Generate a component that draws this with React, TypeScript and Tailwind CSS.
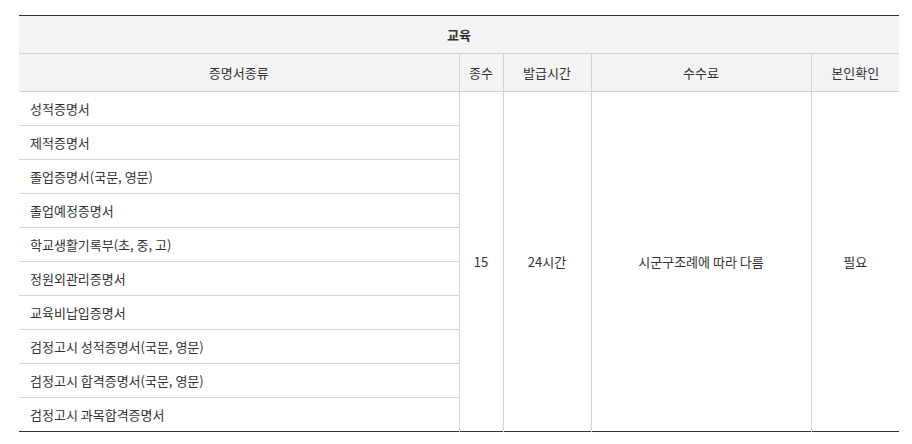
import React from "react";

const items = [
  "성적증명서",
  "제적증명서",
  "졸업증명서(국문, 영문)",
  "졸업예정증명서",
  "학교생활기록부(초, 중, 고)",
  "정원외관리증명서",
  "교육비납입증명서",
  "검정고시 성적증명서(국문, 영문)",
  "검정고시 합격증명서(국문, 영문)",
  "검정고시 과목합격증명서",
];

export default function App() {
  return (
    <div
      className="w-[912px] h-[444px] bg-white pt-[15px] pl-[19px] text-[#333] text-[13px]"
      style={{ fontFamily: '"Noto Sans CJK KR", "Noto Sans", sans-serif' }}
    >
      <table className="w-[880px] border-collapse table-fixed border-t border-b border-t-[#333] border-b-[#333]">
        <colgroup>
          <col className="w-[440px]" />
          <col className="w-[44px]" />
          <col className="w-[88px]" />
          <col className="w-[220px]" />
          <col className="w-[88px]" />
        </colgroup>
        <thead>
          <tr className="h-[38px] bg-[#f4f4f4] border-b border-[#d5d5d5]">
            <th colSpan={5} className="font-bold text-center p-0">
              교육
            </th>
          </tr>
          <tr className="h-[38px] bg-[#f4f4f4] border-b border-[#d5d5d5]">
            <th className="font-normal text-center p-0">증명서종류</th>
            <th className="font-normal text-center p-0 border-l border-[#d5d5d5]">종수</th>
            <th className="font-normal text-center p-0 border-l border-[#d5d5d5]">발급시간</th>
            <th className="font-normal text-center p-0 border-l border-[#d5d5d5]">수수료</th>
            <th className="font-normal text-center p-0 border-l border-[#d5d5d5]">본인확인</th>
          </tr>
        </thead>
        <tbody>
          {items.map((it, i) => (
            <tr key={i} className={`h-[34px] ${i < items.length - 1 ? "border-b border-[#d5d5d5]" : ""}`}>
              <td className="pl-[11px] p-0 text-left">{it}</td>
              {i === 0 && (
                <>
                  <td rowSpan={10} className="text-center p-0 border-l border-[#d5d5d5]">15</td>
                  <td rowSpan={10} className="text-center p-0 border-l border-[#d5d5d5]">24시간</td>
                  <td rowSpan={10} className="text-center p-0 border-l border-[#d5d5d5]">시군구조례에 따라 다름</td>
                  <td rowSpan={10} className="text-center p-0 border-l border-[#d5d5d5]">필요</td>
                </>
              )}
            </tr>
          ))}
        </tbody>
      </table>
    </div>
  );
}
